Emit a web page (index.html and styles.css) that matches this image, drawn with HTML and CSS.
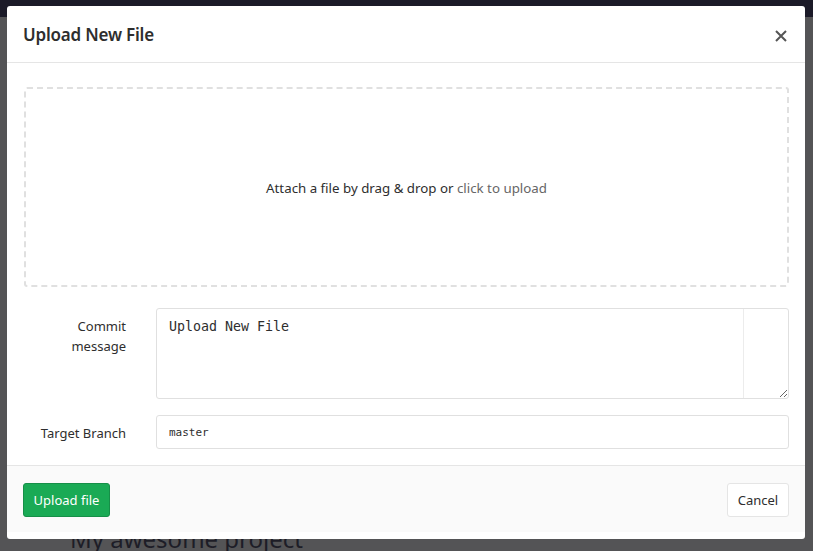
FILE: index.html
```html
<!DOCTYPE html>
<html>
<head>
<meta charset="utf-8">
<link rel="stylesheet" href="styles.css">
</head>
<body>
<div class="page">
  <div class="topbar"></div>
  <div class="page-main">
    <h1 class="project-title">My awesome project</h1>
  </div>
</div>
<div class="modal">
  <div class="modal-header">
    <h3 class="modal-title">Upload New File</h3>
    <button class="close" aria-label="Close">
      <svg width="12" height="12" viewBox="0 0 12 12"><path d="M1 1L11 11M11 1L1 11" stroke="#555" stroke-width="2" fill="none"/></svg>
    </button>
  </div>
  <div class="modal-body">
    <div class="dropzone">
      <span>Attach a file by drag &amp; drop or <a class="upload-link">click to upload</a></span>
    </div>
    <div class="form-row">
      <label class="form-label">Commit<br>message</label>
      <textarea class="form-textarea">Upload New File</textarea>
    </div>
    <div class="form-row">
      <label class="form-label single">Target Branch</label>
      <input class="form-input" value="master">
    </div>
  </div>
  <div class="modal-footer">
    <button class="btn btn-success">Upload file</button>
    <button class="btn btn-default">Cancel</button>
  </div>
</div>
</body>
</html>
```

FILE: styles.css
```css
html, body {
  margin: 0;
  padding: 0;
  width: 813px;
  height: 551px;
  overflow: hidden;
}
body {
  background: #545456;
  font-family: "Noto Sans", "Open Sans", sans-serif;
  position: relative;
}
.page {
  height: 551px;
}
.topbar {
  height: 17px;
  background: #1b1a28;
}
.page-main {
  padding-left: 70px;
}
.project-title {
  margin: 0;
  padding-top: 508px;
  font-size: 24px;
  font-weight: 400;
  color: #1d1d27;
  line-height: 28px;
}
.modal {
  position: absolute;
  left: 7px;
  top: 6px;
  width: 798px;
  height: 533px;
  background: #fff;
  border-radius: 3px;
  box-sizing: border-box;
}
.modal-header {
  height: 57px;
  border-bottom: 1px solid #e5e5e5;
  box-sizing: border-box;
  display: flex;
  align-items: center;
  justify-content: space-between;
  padding: 0 16px 0 16px;
}
.modal-title {
  margin: 0;
  font-size: 17px;
  font-weight: 600;
  color: #2e2e2e;
  letter-spacing: -0.2px;
}
.close {
  background: none;
  border: 0;
  padding: 0;
  margin-right: 2px;
  margin-top: 4px;
  width: 12px;
  height: 12px;
  display: flex;
}
.modal-body {
  padding: 24px 16px 0 17px;
  height: 402px;
  box-sizing: border-box;
}
.dropzone {
  height: 200px;
  border: 2px dashed #e0e0e0;
  border-radius: 3px;
  box-sizing: border-box;
  width: 765px;
  display: flex;
  align-items: center;
  justify-content: center;
  font-size: 13.3px;
  color: #2e2e2e;
  padding-top: 1px;
}
.upload-link {
  color: #666;
}
.form-row {
  display: grid;
  grid-template-columns: 102px 633px;
  column-gap: 30px;
  margin-top: 21px;
}
.form-row + .form-row {
  margin-top: 16px;
}
.form-label {
  text-align: right;
  font-size: 13px;
  color: #2e2e2e;
  line-height: 20px;
  padding-top: 8px;
}
.form-label.single {
  padding-top: 8px;
}
.form-textarea {
  height: 91px;
  box-sizing: border-box;
  border: 1px solid #e0e0e0;
  border-radius: 3px;
  padding: 9px 12px;
  font-family: "DejaVu Sans Mono", monospace;
  font-size: 13.3px;
  line-height: 17px;
  color: #2e2e2e;
  margin: 0;
  background: linear-gradient(to right, #fff 0, #fff 586px, #ececec 586px, #ececec 587px, #fff 587px);
}
.form-input {
  height: 34px;
  box-sizing: border-box;
  border: 1px solid #e0e0e0;
  border-radius: 3px;
  padding: 1px 12px 0;
  font-family: "DejaVu Sans Mono", monospace;
  font-size: 11px;
  color: #2e2e2e;
  margin: 0;
}
.modal-footer {
  height: 67px;
  box-sizing: border-box;
  background: #fafafa;
  border-top: 1px solid #e5e5e5;
  display: flex;
  align-items: center;
  justify-content: space-between;
  padding: 0 16px;
}
.btn {
  height: 34px;
  box-sizing: border-box;
  border-radius: 3px;
  font-family: "Noto Sans", "Open Sans", sans-serif;
  font-size: 13px;
  padding: 0;
  border: 1px solid transparent;
  white-space: nowrap;
  margin-top: 1px;
}
.btn-success {
  background: #1aaa55;
  border-color: #168f48;
  color: #fff;
  width: 87px;
}
.btn-default {
  background: #fff;
  border-color: #e5e5e5;
  color: #2e2e2e;
  width: 62px;
}
```
